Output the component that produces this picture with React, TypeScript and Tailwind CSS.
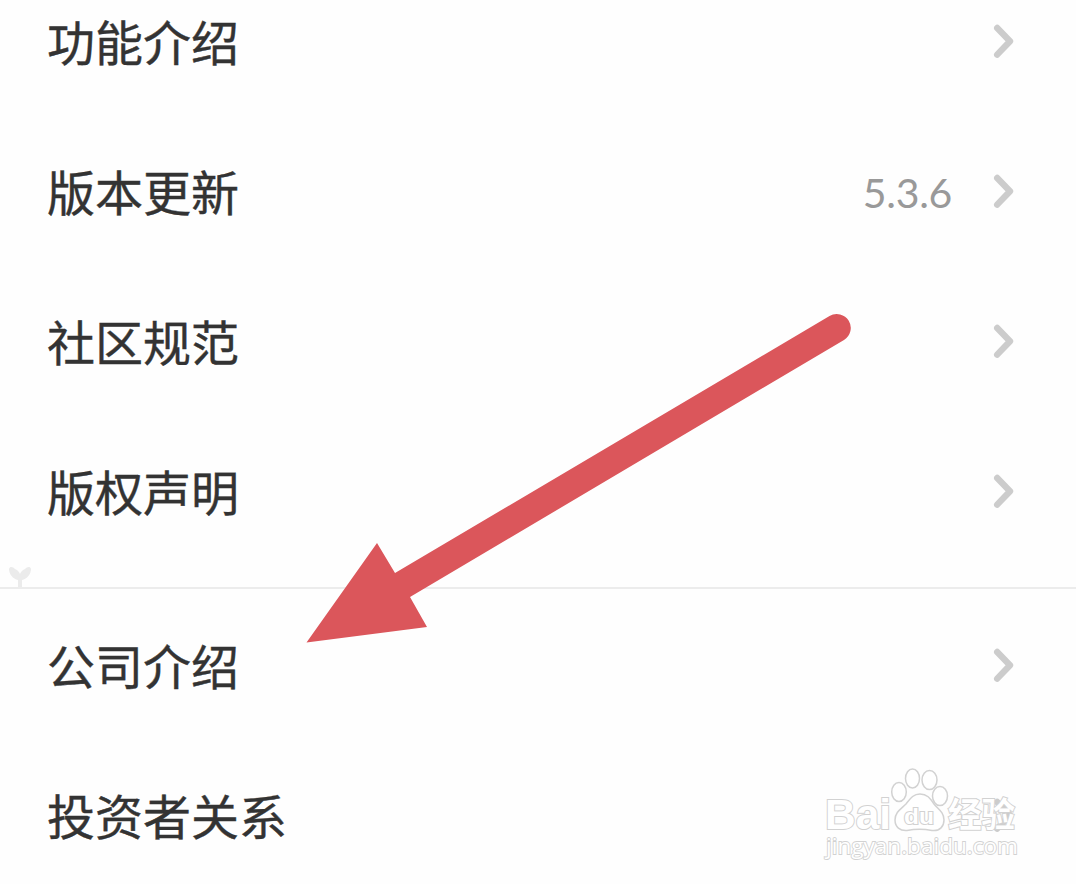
type RowProps = {
  label: string;
  value?: string;
};

function Chevron() {
  return (
    <svg className="h-10 w-7" viewBox="0 0 28 40" fill="none">
      <path
        d="M8.2 6 L21 19.3 L8.2 32.6"
        stroke="#cccccc"
        strokeWidth="6.4"
        strokeLinecap="round"
        strokeLinejoin="round"
      />
    </svg>
  );
}

function Row({ label, value }: RowProps) {
  return (
    <li className="flex h-[150px] items-center justify-between pr-[59px] pl-[47px]">
      <span className="pb-1 text-[48px] leading-none text-[#333333] [-webkit-text-stroke:0.4px_#333333]">
        {label}
      </span>
      <span className="flex items-center gap-[37px]">
        {value && (
          <span className="pt-[1px] font-['Lato','Noto_Sans_CJK_SC',sans-serif] text-[41px] leading-none tracking-[-0.3px] text-[#999999]">
            {value}
          </span>
        )}
        <Chevron />
      </span>
    </li>
  );
}

function Sprout() {
  return (
    <svg className="h-[22px] w-6" viewBox="0 0 24 22" fill="#ebebeb">
      <path d="M10 22 V15 C5 14 1 9 1 4 C2 1 5 2 7 4 C10 5 11 7 12 9 C13 7 14 5 17 4 C19 2 22 1 23 4 C23 9 19 14 14 15 V22 Z" />
    </svg>
  );
}

function Arrow() {
  return (
    <svg
      className="absolute top-[300px] left-[290px] h-[360px] w-[580px]"
      viewBox="290 300 580 360"
      fill="#db565b"
    >
      <path d="M306.5 642.5 L377 543 L395 573 L829.5 316 A14 14 0 0 1 844 340 L410 597 L427 627 Z" />
    </svg>
  );
}

function Watermark() {
  return (
    <svg
      className="absolute top-[760px] left-[810px] h-[110px] w-[220px]"
      viewBox="0 0 220 110"
      fill="#ffffff"
      stroke="#d2d2d2"
      strokeWidth="1.5"
    >
      <ellipse cx="89" cy="32" rx="7.3" ry="9.5" />
      <ellipse cx="102.5" cy="18.5" rx="7" ry="9.5" />
      <ellipse cx="119.5" cy="20" rx="7.5" ry="9.5" />
      <ellipse cx="130" cy="36" rx="7.5" ry="9.5" />
      <path d="M110 34 C103 34 100 39 96 44 C91 49 85 52 85 60 C85 67 90 71 97 70.5 C105 69 114 69 122 70.5 C130 71.5 134 66 134 60 C134 52 128 49 124 44 C120 38 117 34 110 34 Z" />
      <g
        fontFamily="'Liberation Sans', 'Noto Sans CJK SC', sans-serif"
        paintOrder="stroke"
        strokeWidth="2"
      >
        <text
          x="15"
          y="69"
          fontSize="43"
          fontWeight="700"
          textLength="66"
          lengthAdjust="spacingAndGlyphs"
        >
          Bai
        </text>
        <text
          x="94"
          y="64"
          fontSize="22"
          fontWeight="700"
          textLength="30"
          lengthAdjust="spacingAndGlyphs"
        >
          du
        </text>
        <text
          x="138"
          y="67"
          fontSize="34"
          fontWeight="700"
          fontFamily="'Noto Sans CJK SC', sans-serif"
          textLength="67"
          lengthAdjust="spacingAndGlyphs"
        >
          经验
        </text>
        <text
          x="16"
          y="94"
          fontSize="22.5"
          strokeWidth="1.8"
          fontFamily="'Open Sans', sans-serif"
          textLength="192"
          lengthAdjust="spacingAndGlyphs"
        >
          jingyan.baidu.com
        </text>
      </g>
    </svg>
  );
}

export default function App() {
  return (
    <main className="relative h-[884px] w-[1076px] overflow-hidden bg-[#fefefe] font-['Noto_Sans_CJK_SC',sans-serif]">
      <ul className="-mt-[33px]">
        <Row label="功能介绍" />
        <Row label="版本更新" value="5.3.6" />
        <Row label="社区规范" />
        <Row label="版权声明" />
      </ul>
      <div className="mb-[2px] flex h-[22px] items-end border-b-2 border-[#ececec] pl-2">
        <Sprout />
      </div>
      <ul>
        <Row label="公司介绍" />
        <Row label="投资者关系" />
      </ul>
      <Arrow />
      <Watermark />
    </main>
  );
}
